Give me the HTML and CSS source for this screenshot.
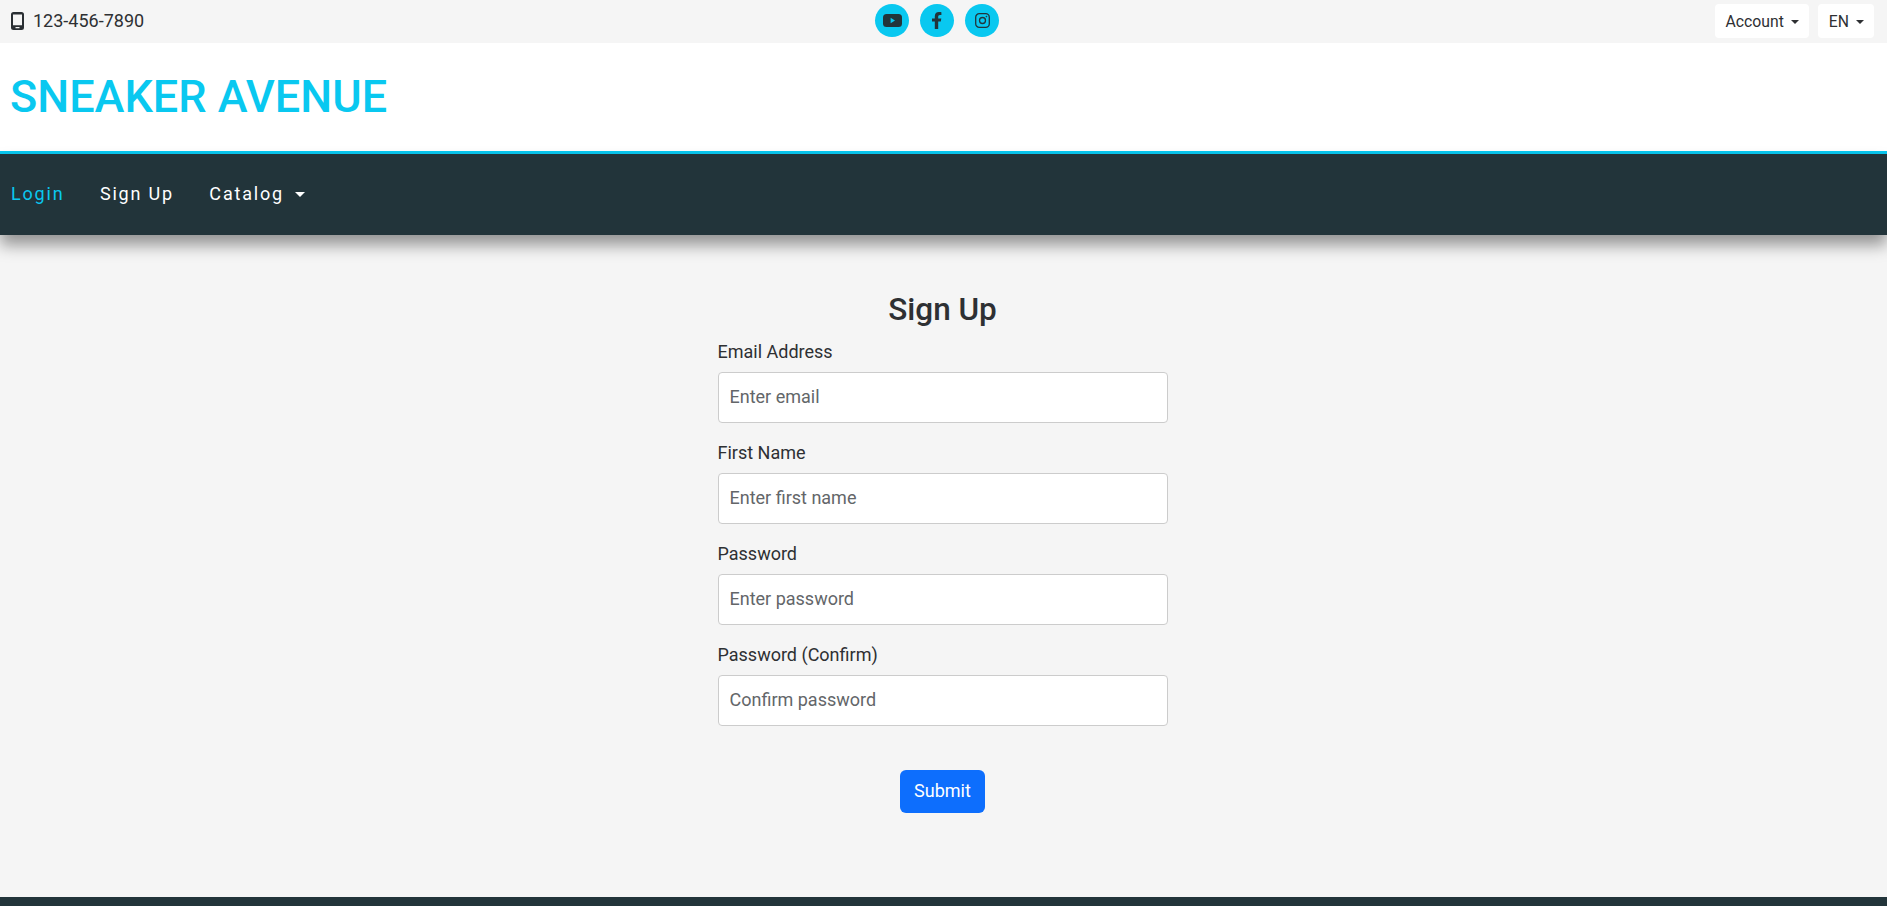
FILE: index.html
```html
<!DOCTYPE html>
<html>
<head>
  <meta charset="UTF-8">
  <title>Sneaker Avenue</title>
  <link rel="stylesheet" href="styles.css">
</head>
<body>

<div class="topbar">
  <div class="phone">
    <svg class="phone-icon" width="13" height="18" viewBox="0 0 13 18"><path fill="#2a2f33" fill-rule="evenodd" d="M2.500 0h8A2.500 2.500 0 0 1 13 2.500v13a2.500 2.500 0 0 1-2.500 2.500h-8A2.500 2.500 0 0 1 0 15.500v-13A2.500 2.500 0 0 1 2.500 0zM2 2.500v10.800h9V2.500zM4.500 15v1.300h4V15z"/></svg>
    <span>123-456-7890</span>
  </div>
  <div class="socials">
    <a class="social" href="#">
      <svg width="19" height="13" viewBox="0 0 19 13"><rect width="19" height="13" rx="3.500" fill="#22343a"/><path d="M7.600 3.800v5.400l4.400-2.700z" fill="#09c8f0"/></svg>
    </a>
    <a class="social" href="#">
      <svg width="10" height="17" viewBox="0 0 10 17"><path fill="#22343a" d="M2.800 17V9.500H0V6.400h2.800V4.300C2.800 1.500 4.400 0 6.900 0 8.100 0 9.400.2 9.400.2v2.700H8c-1.300 0-1.800.8-1.800 1.700v1.800h3.100l-.5 3.100H6.200V17z"/></svg>
    </a>
    <a class="social" href="#">
      <svg width="15" height="15" viewBox="0 0 15 15" fill="none" stroke="#22343a" stroke-width="1.300"><rect x=".7" y=".7" width="13.600" height="13.600" rx="3.600"/><circle cx="7.500" cy="7.500" r="3"/><circle cx="11.400" cy="3.600" r=".5" fill="#22343a" stroke-width=".6"/></svg>
    </a>
  </div>
  <div class="top-buttons">
    <button class="top-btn">Account<span class="caret"></span></button>
    <button class="top-btn">EN<span class="caret"></span></button>
  </div>
</div>

<header class="brand-bar">
  <h1 class="brand">SNEAKER AVENUE</h1>
</header>

<nav class="main-nav">
  <a class="nav-link active" href="#">Login</a>
  <a class="nav-link" href="#">Sign Up</a>
  <a class="nav-link" href="#">Catalog<span class="caret caret-nav"></span></a>
</nav>

<main class="content">
  <form class="signup">
    <h2 class="signup-title">Sign Up</h2>

    <div class="field">
      <label class="field-label">Email Address</label>
      <input class="field-input" type="email" placeholder="Enter email">
    </div>
    <div class="field">
      <label class="field-label">First Name</label>
      <input class="field-input" type="text" placeholder="Enter first name">
    </div>
    <div class="field">
      <label class="field-label">Password</label>
      <input class="field-input" type="password" placeholder="Enter password">
    </div>
    <div class="field">
      <label class="field-label">Password (Confirm)</label>
      <input class="field-input" type="password" placeholder="Confirm password">
    </div>

    <div class="actions">
      <button class="submit" type="button">Submit</button>
    </div>
  </form>
</main>

<footer class="footer"></footer>

</body>
</html>
```

FILE: styles.css
```css
html, body {
  height: 906px;
  overflow: hidden;
}

body {
  margin: 0;
  background: #f5f5f5;
  color: #2e3033;
  font-family: Roboto, sans-serif;
  font-size: 18px;
  line-height: 1.5;
}

/* top strip */
.topbar {
  height: 43px;
  box-sizing: border-box;
  display: grid;
  grid-template-columns: 1fr auto 1fr;
  align-items: start;
  padding: 0 13px 0 11px;
  background: #f5f5f5;
}

.phone {
  display: flex;
  align-items: center;
  gap: 9px;
  height: 40px;
}

.phone-icon {
  margin-top: 2px;
}

.socials {
  display: flex;
  gap: 11px;
  margin-right: 11px;
  padding-top: 4px;
}

.social {
  width: 34px;
  height: 33px;
  border-radius: 50%;
  background: #09c8f0;
  display: flex;
  align-items: center;
  justify-content: center;
}

.top-buttons {
  display: flex;
  justify-content: flex-end;
  gap: 9px;
  padding-top: 4px;
}

.top-btn {
  height: 34px;
  padding: 0 10px 0 11px;
  border: 0;
  border-radius: 4px;
  background: #fff;
  color: #2e3033;
  font-family: Roboto, sans-serif;
  font-size: 15.750px;
}

.caret {
  display: inline-block;
  margin-left: 7px;
  vertical-align: 3px;
  border-top: 4px solid currentColor;
  border-left: 4px solid transparent;
  border-right: 4px solid transparent;
}

/* brand */
.brand-bar {
  height: 108px;
  display: flex;
  align-items: center;
  padding: 0 10px;
  background: #fff;
  border-bottom: 3px solid #09c8f0;
}

.brand {
  margin: 0;
  color: #09c8f0;
  font-size: 45px;
  font-weight: 500;
  line-height: 1.2;
}

/* main navigation */
.main-nav {
  position: relative;
  height: 81px;
  box-sizing: border-box;
  display: flex;
  align-items: center;
  gap: 35.500px;
  padding: 0 11px 2px;
  background: #22343a;
  box-shadow: 0 10px 15px rgba(0, 0, 0, 0.4);
}

.nav-link {
  color: #fff;
  font-size: 18px;
  letter-spacing: 1.800px;
  text-decoration: none;
}

.nav-link.active {
  color: #09c8f0;
}

.caret-nav {
  margin-left: 11px;
  vertical-align: 3px;
  border-top-width: 5px;
  border-left-width: 5px;
  border-right-width: 5px;
}

/* form */
.content {
  display: flex;
  justify-content: center;
  height: 662px;
}

.signup {
  width: 450px;
  margin-right: 2px;
  padding-top: 56px;
}

.signup-title {
  margin: 0 0 9px;
  text-align: center;
  font-size: 31.500px;
  font-weight: 500;
  line-height: 1.2;
}

.field {
  margin-bottom: 16px;
}

.field-label {
  display: block;
  margin-bottom: 7px;
}

.field-input {
  display: block;
  width: 100%;
  height: 51px;
  box-sizing: border-box;
  padding: 5px 11px 7px;
  border: 1px solid #ccc;
  border-radius: 4px;
  background: #fff;
  font-family: Roboto, sans-serif;
  font-size: 18px;
}

.field-input::placeholder {
  color: #636669;
}

.actions {
  display: flex;
  justify-content: center;
  padding-top: 28px;
}

.submit {
  height: 43px;
  padding: 0 14px 2px;
  border: 0;
  border-radius: 6px;
  background: #0d6efd;
  color: #fff;
  font-family: Roboto, sans-serif;
  font-size: 18px;
}

.footer {
  height: 9px;
  background: #22343a;
}
```
